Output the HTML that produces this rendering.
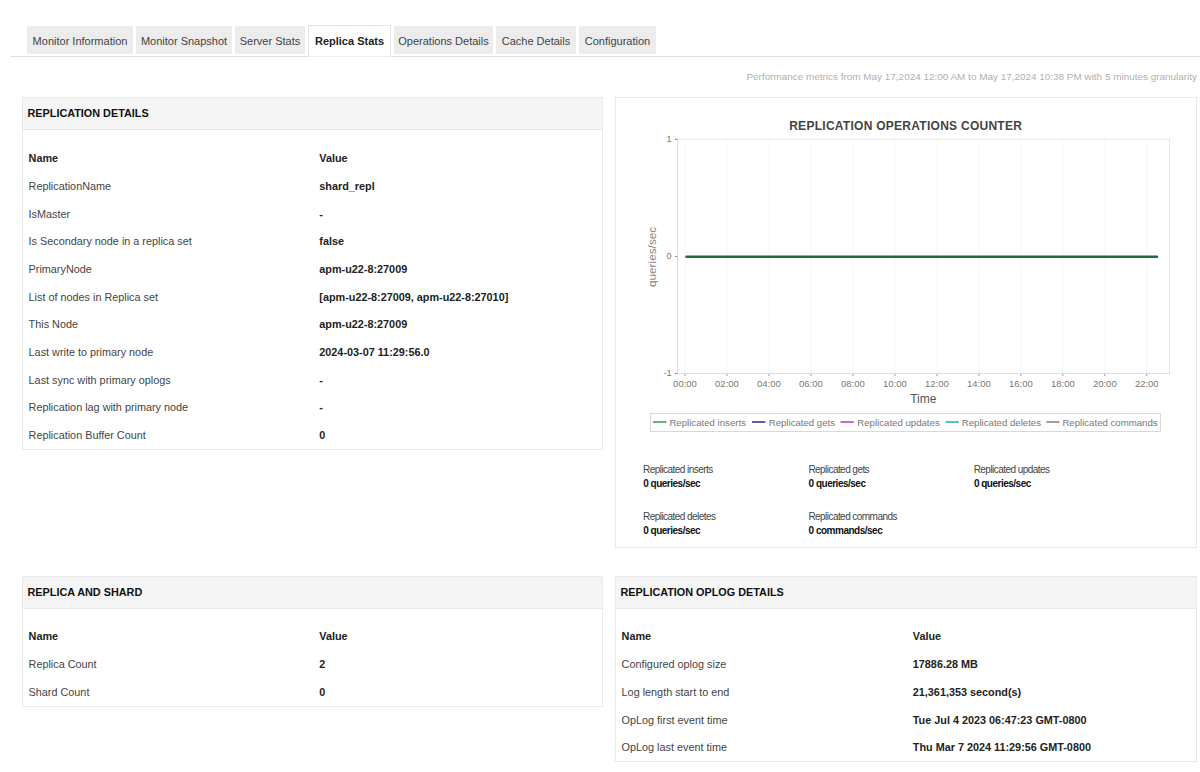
<!DOCTYPE html><html><head><meta charset="utf-8"><style>
html,body{margin:0;padding:0;background:#fff;}
body{width:1200px;height:772px;overflow:hidden;position:relative;font-family:"Liberation Sans",sans-serif;}
.t{position:absolute;white-space:nowrap;}
.r{position:absolute;}
</style></head><body>
<div class="r" style="left:11.00px;top:56.00px;width:1189.00px;height:1.00px;background:#dedede;"></div>
<div class="r" style="left:27.00px;top:26.00px;width:106.00px;height:28.00px;background:#ececec;"></div>
<div class="t" style="top:35.69px;font-size:11px;line-height:11.0px;color:#444;font-weight:400;left:-220.00px;width:600px;text-align:center;">Monitor Information</div>
<div class="r" style="left:136.00px;top:26.00px;width:96.00px;height:28.00px;background:#ececec;"></div>
<div class="t" style="top:35.69px;font-size:11px;line-height:11.0px;color:#444;font-weight:400;left:-116.00px;width:600px;text-align:center;">Monitor Snapshot</div>
<div class="r" style="left:235.00px;top:26.00px;width:70.00px;height:28.00px;background:#ececec;"></div>
<div class="t" style="top:35.69px;font-size:11px;line-height:11.0px;color:#444;font-weight:400;left:-30.00px;width:600px;text-align:center;">Server Stats</div>
<div class="r" style="left:308.00px;top:25.00px;width:83.00px;height:32.00px;background:#fff;border:1px solid #e6e6e6;border-bottom:none;box-sizing:border-box;"></div>
<div class="r" style="left:308.00px;top:56.00px;width:83.00px;height:1.00px;background:#f0f0f0;"></div>
<div class="t" style="top:35.69px;font-size:11px;line-height:11.0px;color:#222;font-weight:700;left:49.50px;width:600px;text-align:center;">Replica Stats</div>
<div class="r" style="left:394.00px;top:26.00px;width:99.00px;height:28.00px;background:#ececec;"></div>
<div class="t" style="top:35.69px;font-size:11px;line-height:11.0px;color:#444;font-weight:400;left:143.50px;width:600px;text-align:center;">Operations Details</div>
<div class="r" style="left:496.00px;top:26.00px;width:80.00px;height:28.00px;background:#ececec;"></div>
<div class="t" style="top:35.69px;font-size:11px;line-height:11.0px;color:#444;font-weight:400;left:236.00px;width:600px;text-align:center;">Cache Details</div>
<div class="r" style="left:579.00px;top:26.00px;width:77.00px;height:28.00px;background:#ececec;"></div>
<div class="t" style="top:35.69px;font-size:11px;line-height:11.0px;color:#444;font-weight:400;left:317.50px;width:600px;text-align:center;">Configuration</div>
<div class="t" style="top:71.59px;font-size:9.93px;line-height:9.93px;color:#b0b0b0;font-weight:400;right:3.00px;text-align:right;">Performance metrics from May 17,2024 12:00 AM to May 17,2024 10:38 PM with 5 minutes granularity</div>
<div class="r" style="left:22.00px;top:97.00px;width:581.00px;height:353.00px;background:#fff;border:1px solid #e9e9e9;box-sizing:border-box;"></div>
<div class="r" style="left:22.00px;top:97.00px;width:581.00px;height:32.50px;background:#f5f5f5;border:1px solid #e9e9e9;box-sizing:border-box;"></div>
<div class="t" style="top:108.13px;font-size:10.83px;line-height:10.83px;color:#111;font-weight:700;left:27.50px;">REPLICATION DETAILS</div>
<div class="t" style="top:153.43px;font-size:10.83px;line-height:10.83px;color:#222;font-weight:700;left:28.60px;">Name</div>
<div class="t" style="top:153.43px;font-size:10.83px;line-height:10.83px;color:#222;font-weight:700;left:319.30px;">Value</div>
<div class="t" style="top:181.09px;font-size:10.83px;line-height:10.83px;color:#444;font-weight:400;left:28.60px;">ReplicationName</div>
<div class="t" style="top:181.09px;font-size:10.83px;line-height:10.83px;color:#222;font-weight:700;left:319.30px;">shard_repl</div>
<div class="t" style="top:208.75px;font-size:10.83px;line-height:10.83px;color:#444;font-weight:400;left:28.60px;">IsMaster</div>
<div class="t" style="top:208.75px;font-size:10.83px;line-height:10.83px;color:#222;font-weight:700;left:319.30px;">-</div>
<div class="t" style="top:236.41px;font-size:10.83px;line-height:10.83px;color:#444;font-weight:400;left:28.60px;">Is Secondary node in a replica set</div>
<div class="t" style="top:236.41px;font-size:10.83px;line-height:10.83px;color:#222;font-weight:700;left:319.30px;">false</div>
<div class="t" style="top:264.07px;font-size:10.83px;line-height:10.83px;color:#444;font-weight:400;left:28.60px;">PrimaryNode</div>
<div class="t" style="top:264.07px;font-size:10.83px;line-height:10.83px;color:#222;font-weight:700;left:319.30px;">apm-u22-8:27009</div>
<div class="t" style="top:291.73px;font-size:10.83px;line-height:10.83px;color:#444;font-weight:400;left:28.60px;">List of nodes in Replica set</div>
<div class="t" style="top:291.73px;font-size:10.83px;line-height:10.83px;color:#222;font-weight:700;left:319.30px;">[apm-u22-8:27009, apm-u22-8:27010]</div>
<div class="t" style="top:319.39px;font-size:10.83px;line-height:10.83px;color:#444;font-weight:400;left:28.60px;">This Node</div>
<div class="t" style="top:319.39px;font-size:10.83px;line-height:10.83px;color:#222;font-weight:700;left:319.30px;">apm-u22-8:27009</div>
<div class="t" style="top:347.05px;font-size:10.83px;line-height:10.83px;color:#444;font-weight:400;left:28.60px;">Last write to primary node</div>
<div class="t" style="top:347.05px;font-size:10.83px;line-height:10.83px;color:#222;font-weight:700;left:319.30px;">2024-03-07 11:29:56.0</div>
<div class="t" style="top:374.71px;font-size:10.83px;line-height:10.83px;color:#444;font-weight:400;left:28.60px;">Last sync with primary oplogs</div>
<div class="t" style="top:374.71px;font-size:10.83px;line-height:10.83px;color:#222;font-weight:700;left:319.30px;">-</div>
<div class="t" style="top:402.37px;font-size:10.83px;line-height:10.83px;color:#444;font-weight:400;left:28.60px;">Replication lag with primary node</div>
<div class="t" style="top:402.37px;font-size:10.83px;line-height:10.83px;color:#222;font-weight:700;left:319.30px;">-</div>
<div class="t" style="top:430.03px;font-size:10.83px;line-height:10.83px;color:#444;font-weight:400;left:28.60px;">Replication Buffer Count</div>
<div class="t" style="top:430.03px;font-size:10.83px;line-height:10.83px;color:#222;font-weight:700;left:319.30px;">0</div>
<div class="r" style="left:22.00px;top:576.00px;width:581.00px;height:130.50px;background:#fff;border:1px solid #e9e9e9;box-sizing:border-box;"></div>
<div class="r" style="left:22.00px;top:576.00px;width:581.00px;height:33.00px;background:#f5f5f5;border:1px solid #e9e9e9;box-sizing:border-box;"></div>
<div class="t" style="top:587.13px;font-size:10.83px;line-height:10.83px;color:#111;font-weight:700;left:27.50px;">REPLICA AND SHARD</div>
<div class="t" style="top:631.43px;font-size:10.83px;line-height:10.83px;color:#222;font-weight:700;left:28.60px;">Name</div>
<div class="t" style="top:631.43px;font-size:10.83px;line-height:10.83px;color:#222;font-weight:700;left:319.30px;">Value</div>
<div class="t" style="top:659.18px;font-size:10.83px;line-height:10.83px;color:#444;font-weight:400;left:28.60px;">Replica Count</div>
<div class="t" style="top:659.18px;font-size:10.83px;line-height:10.83px;color:#222;font-weight:700;left:319.30px;">2</div>
<div class="t" style="top:686.93px;font-size:10.83px;line-height:10.83px;color:#444;font-weight:400;left:28.60px;">Shard Count</div>
<div class="t" style="top:686.93px;font-size:10.83px;line-height:10.83px;color:#222;font-weight:700;left:319.30px;">0</div>
<div class="r" style="left:615.00px;top:576.00px;width:582.00px;height:186.00px;background:#fff;border:1px solid #e9e9e9;box-sizing:border-box;"></div>
<div class="r" style="left:615.00px;top:576.00px;width:582.00px;height:32.50px;background:#f5f5f5;border:1px solid #e9e9e9;box-sizing:border-box;"></div>
<div class="t" style="top:587.13px;font-size:10.83px;line-height:10.83px;color:#111;font-weight:700;left:620.50px;">REPLICATION OPLOG DETAILS</div>
<div class="t" style="top:631.23px;font-size:10.83px;line-height:10.83px;color:#222;font-weight:700;left:621.60px;">Name</div>
<div class="t" style="top:631.23px;font-size:10.83px;line-height:10.83px;color:#222;font-weight:700;left:912.80px;">Value</div>
<div class="t" style="top:659.03px;font-size:10.83px;line-height:10.83px;color:#444;font-weight:400;left:621.60px;">Configured oplog size</div>
<div class="t" style="top:659.03px;font-size:10.83px;line-height:10.83px;color:#222;font-weight:700;left:912.80px;">17886.28 MB</div>
<div class="t" style="top:686.83px;font-size:10.83px;line-height:10.83px;color:#444;font-weight:400;left:621.60px;">Log length start to end</div>
<div class="t" style="top:686.83px;font-size:10.83px;line-height:10.83px;color:#222;font-weight:700;left:912.80px;">21,361,353 second(s)</div>
<div class="t" style="top:714.63px;font-size:10.83px;line-height:10.83px;color:#444;font-weight:400;left:621.60px;">OpLog first event time</div>
<div class="t" style="top:714.63px;font-size:10.83px;line-height:10.83px;color:#222;font-weight:700;left:912.80px;">Tue Jul 4 2023 06:47:23 GMT-0800</div>
<div class="t" style="top:742.43px;font-size:10.83px;line-height:10.83px;color:#444;font-weight:400;left:621.60px;">OpLog last event time</div>
<div class="t" style="top:742.43px;font-size:10.83px;line-height:10.83px;color:#222;font-weight:700;left:912.80px;">Thu Mar 7 2024 11:29:56 GMT-0800</div>
<div class="r" style="left:615.00px;top:97.00px;width:582.00px;height:451.00px;background:#fff;border:1px solid #e9e9e9;box-sizing:border-box;"></div>
<div class="t" style="top:119.74px;font-size:12px;line-height:12.0px;color:#444;font-weight:700;letter-spacing:0.27px;left:605.70px;width:600px;text-align:center;">REPLICATION OPERATIONS COUNTER</div>
<svg width="1200" height="772" style="position:absolute;left:0;top:0"><line x1="685.0" y1="139.3" x2="685.0" y2="373.5" stroke="#f7f7f7" stroke-width="1"/><line x1="726.98" y1="139.3" x2="726.98" y2="373.5" stroke="#f7f7f7" stroke-width="1"/><line x1="768.96" y1="139.3" x2="768.96" y2="373.5" stroke="#f7f7f7" stroke-width="1"/><line x1="810.94" y1="139.3" x2="810.94" y2="373.5" stroke="#f7f7f7" stroke-width="1"/><line x1="852.92" y1="139.3" x2="852.92" y2="373.5" stroke="#f7f7f7" stroke-width="1"/><line x1="894.9" y1="139.3" x2="894.9" y2="373.5" stroke="#f7f7f7" stroke-width="1"/><line x1="936.88" y1="139.3" x2="936.88" y2="373.5" stroke="#f7f7f7" stroke-width="1"/><line x1="978.8599999999999" y1="139.3" x2="978.8599999999999" y2="373.5" stroke="#f7f7f7" stroke-width="1"/><line x1="1020.8399999999999" y1="139.3" x2="1020.8399999999999" y2="373.5" stroke="#f7f7f7" stroke-width="1"/><line x1="1062.82" y1="139.3" x2="1062.82" y2="373.5" stroke="#f7f7f7" stroke-width="1"/><line x1="1104.8" y1="139.3" x2="1104.8" y2="373.5" stroke="#f7f7f7" stroke-width="1"/><line x1="1146.78" y1="139.3" x2="1146.78" y2="373.5" stroke="#f7f7f7" stroke-width="1"/><rect x="677.5" y="139.3" width="492.0" height="234.2" fill="none" stroke="#e6e6e6" stroke-width="1"/><line x1="677.5" y1="139.3" x2="677.5" y2="373.5" stroke="#dedede" stroke-width="1"/><line x1="677.5" y1="373.5" x2="1169.5" y2="373.5" stroke="#dedede" stroke-width="1"/><line x1="675.0" y1="139.3" x2="677.5" y2="139.3" stroke="#888" stroke-width="1"/><line x1="675.0" y1="256.4" x2="677.5" y2="256.4" stroke="#888" stroke-width="1"/><line x1="675.0" y1="373.5" x2="677.5" y2="373.5" stroke="#888" stroke-width="1"/><line x1="685.0" y1="374.0" x2="685.0" y2="376.0" stroke="#999" stroke-width="1"/><line x1="726.98" y1="374.0" x2="726.98" y2="376.0" stroke="#999" stroke-width="1"/><line x1="768.96" y1="374.0" x2="768.96" y2="376.0" stroke="#999" stroke-width="1"/><line x1="810.94" y1="374.0" x2="810.94" y2="376.0" stroke="#999" stroke-width="1"/><line x1="852.92" y1="374.0" x2="852.92" y2="376.0" stroke="#999" stroke-width="1"/><line x1="894.9" y1="374.0" x2="894.9" y2="376.0" stroke="#999" stroke-width="1"/><line x1="936.88" y1="374.0" x2="936.88" y2="376.0" stroke="#999" stroke-width="1"/><line x1="978.8599999999999" y1="374.0" x2="978.8599999999999" y2="376.0" stroke="#999" stroke-width="1"/><line x1="1020.8399999999999" y1="374.0" x2="1020.8399999999999" y2="376.0" stroke="#999" stroke-width="1"/><line x1="1062.82" y1="374.0" x2="1062.82" y2="376.0" stroke="#999" stroke-width="1"/><line x1="1104.8" y1="374.0" x2="1104.8" y2="376.0" stroke="#999" stroke-width="1"/><line x1="1146.78" y1="374.0" x2="1146.78" y2="376.0" stroke="#999" stroke-width="1"/><line x1="686.5" y1="256.8" x2="1157" y2="256.8" stroke="#1e6b3c" stroke-width="2.5" stroke-linecap="round"/><rect x="650.5" y="413.5" width="510" height="18" fill="#fff" stroke="#d8d8d8" stroke-width="1"/><line x1="653" y1="422" x2="666.3" y2="422" stroke="#3aa84a" stroke-width="1.6"/><line x1="752" y1="422" x2="765.3" y2="422" stroke="#34349a" stroke-width="1.6"/><line x1="840.5" y1="422" x2="853.8" y2="422" stroke="#c040c0" stroke-width="1.6"/><line x1="945.5" y1="422" x2="958.8" y2="422" stroke="#30b0b0" stroke-width="1.6"/><line x1="1046.25" y1="422" x2="1059.55" y2="422" stroke="#a08080" stroke-width="1.6"/></svg>
<div class="t" style="top:134.88px;font-size:9px;line-height:9.0px;color:#777;font-weight:400;right:528.50px;text-align:right;">1</div>
<div class="t" style="top:251.98px;font-size:9px;line-height:9.0px;color:#777;font-weight:400;right:528.50px;text-align:right;">0</div>
<div class="t" style="top:369.08px;font-size:9px;line-height:9.0px;color:#777;font-weight:400;right:528.50px;text-align:right;">-1</div>
<div class="t" style="top:378.66px;font-size:9.5px;line-height:9.5px;color:#777;font-weight:400;left:385.00px;width:600px;text-align:center;">00:00</div>
<div class="t" style="top:378.66px;font-size:9.5px;line-height:9.5px;color:#777;font-weight:400;left:426.98px;width:600px;text-align:center;">02:00</div>
<div class="t" style="top:378.66px;font-size:9.5px;line-height:9.5px;color:#777;font-weight:400;left:468.96px;width:600px;text-align:center;">04:00</div>
<div class="t" style="top:378.66px;font-size:9.5px;line-height:9.5px;color:#777;font-weight:400;left:510.94px;width:600px;text-align:center;">06:00</div>
<div class="t" style="top:378.66px;font-size:9.5px;line-height:9.5px;color:#777;font-weight:400;left:552.92px;width:600px;text-align:center;">08:00</div>
<div class="t" style="top:378.66px;font-size:9.5px;line-height:9.5px;color:#777;font-weight:400;left:594.90px;width:600px;text-align:center;">10:00</div>
<div class="t" style="top:378.66px;font-size:9.5px;line-height:9.5px;color:#777;font-weight:400;left:636.88px;width:600px;text-align:center;">12:00</div>
<div class="t" style="top:378.66px;font-size:9.5px;line-height:9.5px;color:#777;font-weight:400;left:678.86px;width:600px;text-align:center;">14:00</div>
<div class="t" style="top:378.66px;font-size:9.5px;line-height:9.5px;color:#777;font-weight:400;left:720.84px;width:600px;text-align:center;">16:00</div>
<div class="t" style="top:378.66px;font-size:9.5px;line-height:9.5px;color:#777;font-weight:400;left:762.82px;width:600px;text-align:center;">18:00</div>
<div class="t" style="top:378.66px;font-size:9.5px;line-height:9.5px;color:#777;font-weight:400;left:804.80px;width:600px;text-align:center;">20:00</div>
<div class="t" style="top:378.66px;font-size:9.5px;line-height:9.5px;color:#777;font-weight:400;left:846.78px;width:600px;text-align:center;">22:00</div>
<div class="t" style="top:392.74px;font-size:12px;line-height:12.0px;color:#555;font-weight:400;left:623.30px;width:600px;text-align:center;">Time</div>
<div class="t" style="left:553.00px;top:251.35px;width:200px;height:11.8px;text-align:center;font-size:11.8px;line-height:11.8px;color:#858585;transform:rotate(-90deg);transform-origin:50% 50%;">queries/sec</div>
<div class="t" style="top:418.03px;font-size:9.65px;line-height:9.65px;color:#777;font-weight:400;left:407.70px;width:600px;text-align:center;">Replicated inserts</div>
<div class="t" style="top:418.03px;font-size:9.65px;line-height:9.65px;color:#777;font-weight:400;left:501.90px;width:600px;text-align:center;">Replicated gets</div>
<div class="t" style="top:418.03px;font-size:9.65px;line-height:9.65px;color:#777;font-weight:400;left:598.50px;width:600px;text-align:center;">Replicated updates</div>
<div class="t" style="top:418.03px;font-size:9.65px;line-height:9.65px;color:#777;font-weight:400;left:701.40px;width:600px;text-align:center;">Replicated deletes</div>
<div class="t" style="top:418.03px;font-size:9.65px;line-height:9.65px;color:#777;font-weight:400;left:810.00px;width:600px;text-align:center;">Replicated commands</div>
<div class="t" style="top:464.84px;font-size:10px;line-height:10.0px;color:#444;font-weight:400;letter-spacing:-0.55px;left:643.05px;">Replicated inserts</div>
<div class="t" style="top:478.94px;font-size:10px;line-height:10.0px;color:#111;font-weight:700;letter-spacing:-0.5px;left:643.25px;">0 queries/sec</div>
<div class="t" style="top:464.84px;font-size:10px;line-height:10.0px;color:#444;font-weight:400;letter-spacing:-0.55px;left:808.40px;">Replicated gets</div>
<div class="t" style="top:478.94px;font-size:10px;line-height:10.0px;color:#111;font-weight:700;letter-spacing:-0.5px;left:808.60px;">0 queries/sec</div>
<div class="t" style="top:464.84px;font-size:10px;line-height:10.0px;color:#444;font-weight:400;letter-spacing:-0.55px;left:973.70px;">Replicated updates</div>
<div class="t" style="top:478.94px;font-size:10px;line-height:10.0px;color:#111;font-weight:700;letter-spacing:-0.5px;left:973.90px;">0 queries/sec</div>
<div class="t" style="top:511.74px;font-size:10px;line-height:10.0px;color:#444;font-weight:400;letter-spacing:-0.55px;left:643.05px;">Replicated deletes</div>
<div class="t" style="top:525.84px;font-size:10px;line-height:10.0px;color:#111;font-weight:700;letter-spacing:-0.5px;left:643.25px;">0 queries/sec</div>
<div class="t" style="top:511.74px;font-size:10px;line-height:10.0px;color:#444;font-weight:400;letter-spacing:-0.55px;left:808.40px;">Replicated commands</div>
<div class="t" style="top:525.84px;font-size:10px;line-height:10.0px;color:#111;font-weight:700;letter-spacing:-0.5px;left:808.60px;">0 commands/sec</div>
</body></html>
